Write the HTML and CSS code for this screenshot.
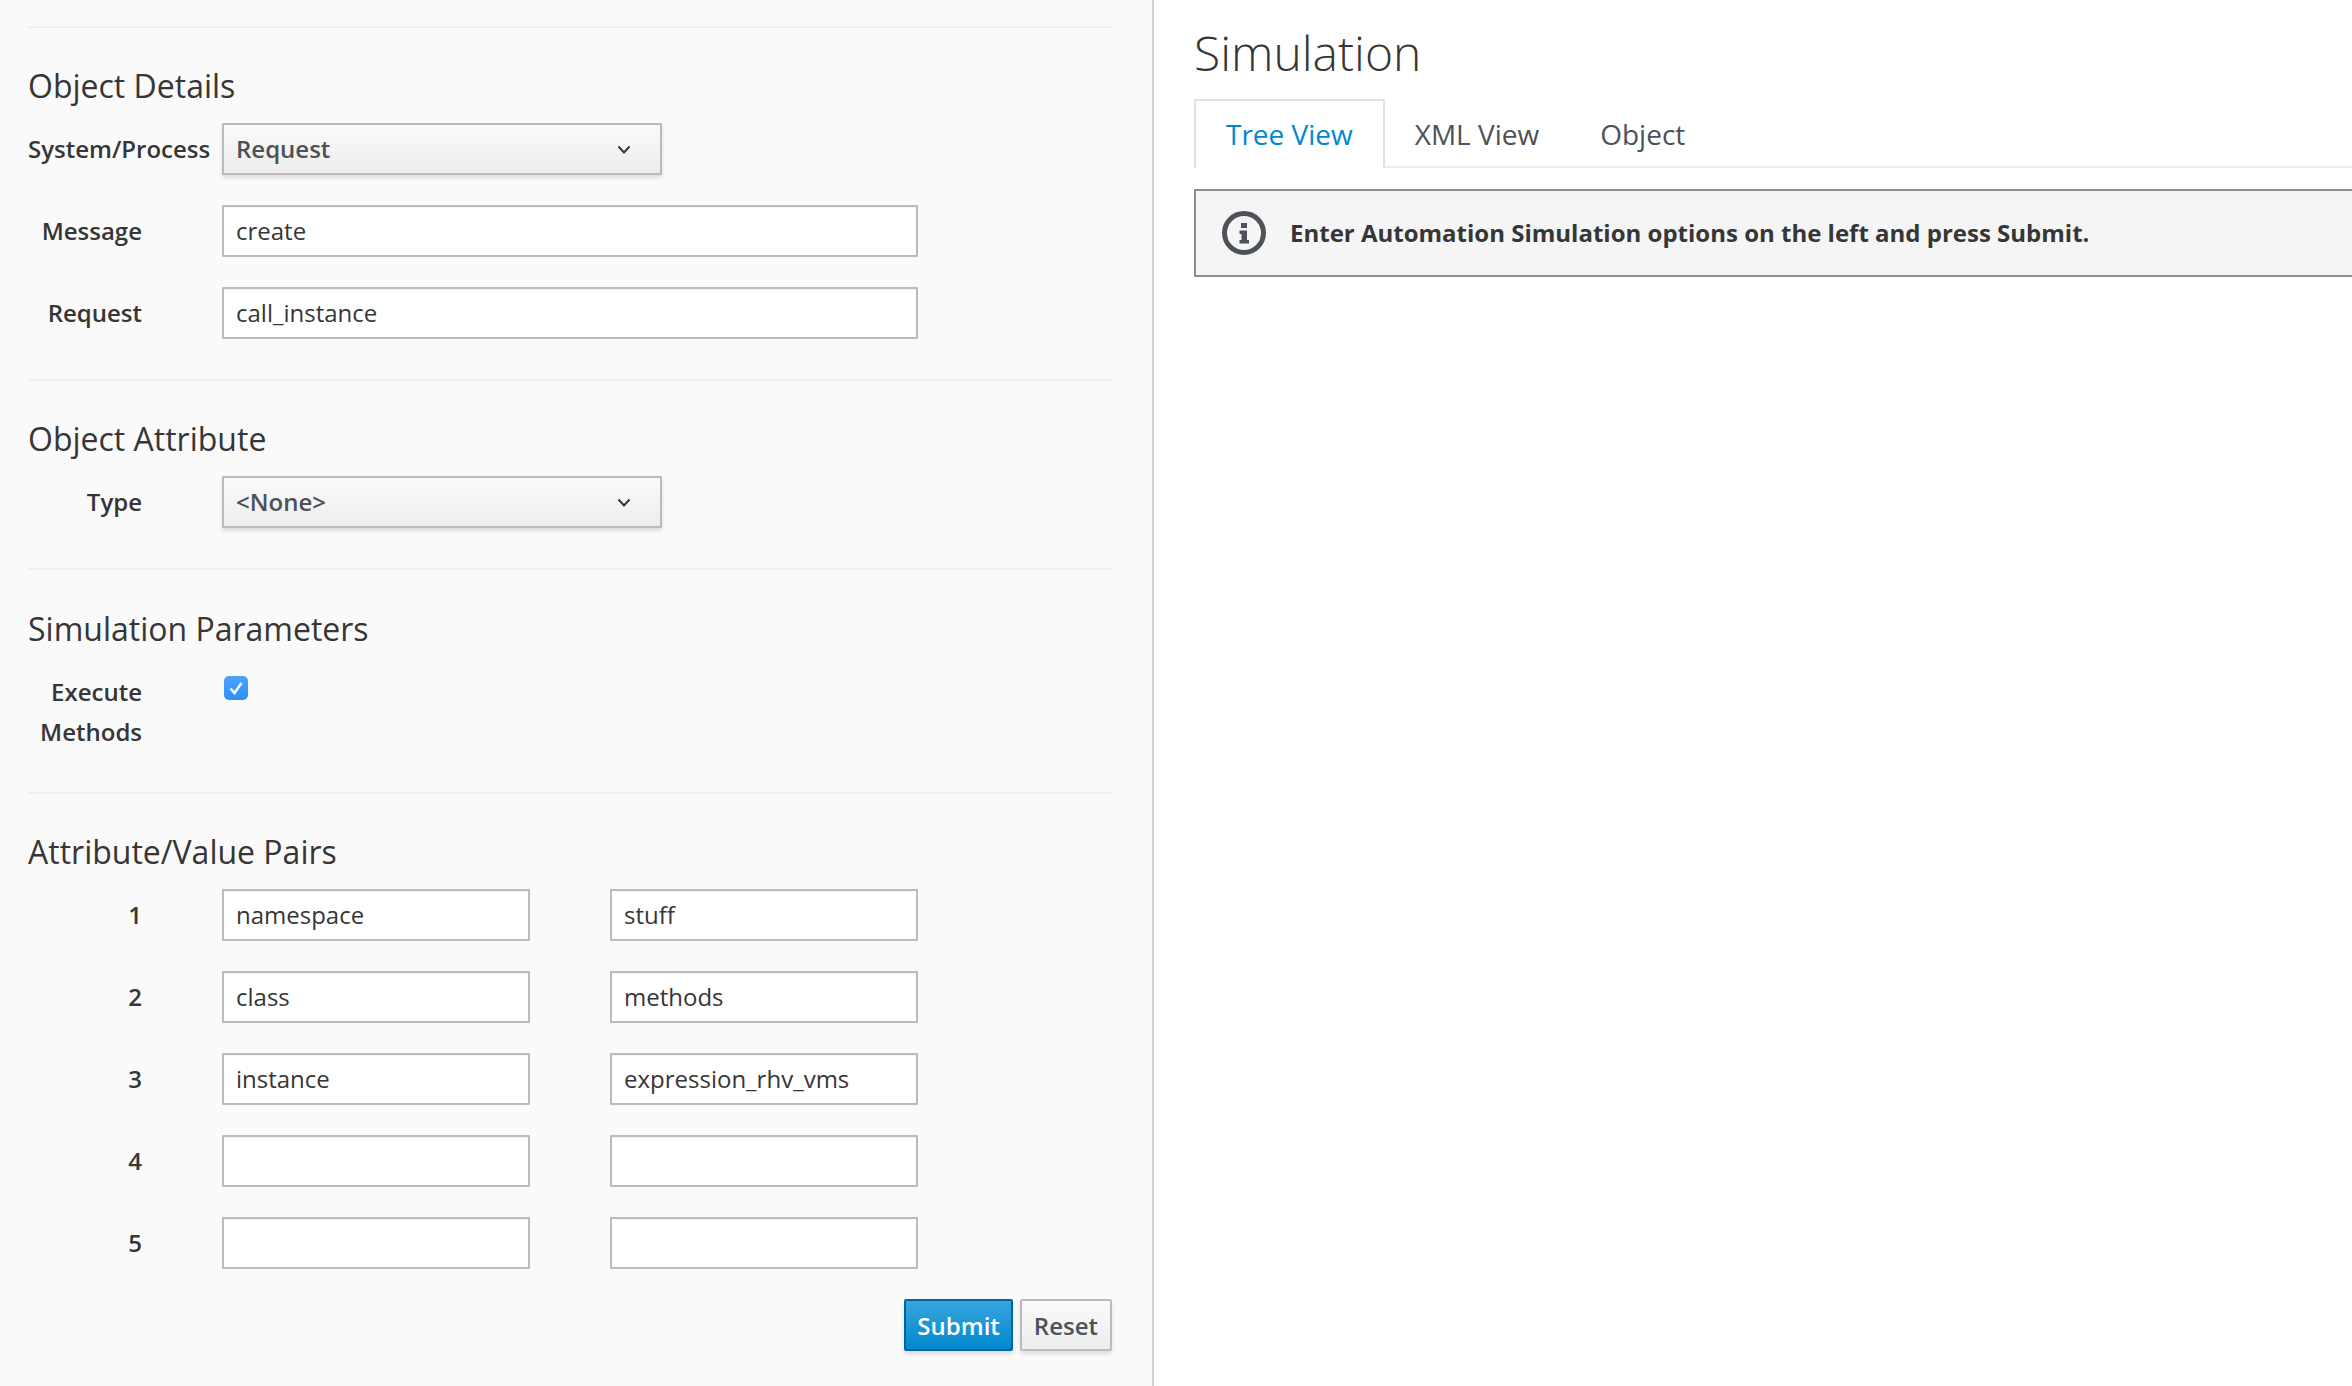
FILE: index.html
```html
<!DOCTYPE html>
<html lang="en">
<head>
  <meta charset="UTF-8">
  <title>Simulation</title>
  <link rel="stylesheet" href="styles.css">
</head>
<body>
  <div class="page">
    <aside class="sidebar">
      <hr class="rule">

      <h3>Object Details</h3>
      <div class="form-row">
        <label class="row-label wide">System/Process</label>
        <div class="select-wrap">
          <select class="select"><option>Request</option></select>
          <svg class="chevron" viewBox="0 0 14 10" width="14" height="10"><path d="M1.5 1.5 7 7.5l5.5-6" fill="none" stroke="#363636" stroke-width="2"/></svg>
        </div>
      </div>
      <div class="form-row">
        <label class="row-label">Message</label>
        <input class="input full" type="text" value="create">
      </div>
      <div class="form-row">
        <label class="row-label">Request</label>
        <input class="input full" type="text" value="call_instance">
      </div>
      <hr class="rule">

      <h3>Object Attribute</h3>
      <div class="form-row">
        <label class="row-label">Type</label>
        <div class="select-wrap">
          <select class="select"><option>&lt;None&gt;</option></select>
          <svg class="chevron" viewBox="0 0 14 10" width="14" height="10"><path d="M1.5 1.5 7 7.5l5.5-6" fill="none" stroke="#363636" stroke-width="2"/></svg>
        </div>
      </div>
      <hr class="rule">

      <h3 class="params-title">Simulation Parameters</h3>
      <div class="form-row check-row">
        <label class="row-label">Execute Methods</label>
        <span class="checkbox">
          <svg viewBox="0 0 24 24" width="24" height="24"><path d="M6.5 12.5 10.5 17 17.5 7" fill="none" stroke="#fff" stroke-width="2.4"/></svg>
        </span>
      </div>
      <hr class="rule">

      <h3>Attribute/Value Pairs</h3>
      <div class="form-row">
        <label class="row-label">1</label>
        <div class="pair">
          <input class="input" type="text" value="namespace">
          <input class="input" type="text" value="stuff">
        </div>
      </div>
      <div class="form-row">
        <label class="row-label">2</label>
        <div class="pair">
          <input class="input" type="text" value="class">
          <input class="input" type="text" value="methods">
        </div>
      </div>
      <div class="form-row">
        <label class="row-label">3</label>
        <div class="pair">
          <input class="input" type="text" value="instance">
          <input class="input" type="text" value="expression_rhv_vms">
        </div>
      </div>
      <div class="form-row">
        <label class="row-label">4</label>
        <div class="pair">
          <input class="input" type="text">
          <input class="input" type="text">
        </div>
      </div>
      <div class="form-row">
        <label class="row-label">5</label>
        <div class="pair">
          <input class="input" type="text">
          <input class="input" type="text">
        </div>
      </div>

      <div class="actions">
        <button class="btn btn-primary">Submit</button>
        <button class="btn">Reset</button>
      </div>
    </aside>

    <main class="content">
      <h1>Simulation</h1>
      <ul class="tabs">
        <li class="tab active">Tree View</li>
        <li class="tab">XML View</li>
        <li class="tab">Object</li>
      </ul>
      <div class="alert">
        <svg class="alert-icon" viewBox="0 0 44 44" width="44" height="44">
          <circle cx="22" cy="22" r="19.5" fill="none" stroke="#4d5258" stroke-width="5"/>
          <path d="M19 12h6v5h-6zM17.5 19.5H25V29h2v3.5H17.5V29h2v-6h-2z" fill="#4d5258"/>
        </svg>
        <strong>Enter Automation Simulation options on the left and press Submit.</strong>
      </div>
    </main>
  </div>
</body>
</html>
```

FILE: styles.css
```css
html, body {
  margin: 0;
  height: 100%;
  overflow: hidden;
}
body {
  background: #fff;
  color: #363636;
  font-family: "Open Sans", "Liberation Sans", sans-serif;
  font-size: 24px;
}
.page {
  display: flex;
  height: 1386px;
}

/* left column */
.sidebar {
  width: 1154px;
  flex: none;
  box-sizing: border-box;
  padding: 26px 40px 0 28px;
  background: #fafafa;
  border-right: 2px solid #d1d1d1;
}
.rule {
  height: 2px;
  margin: 0;
  border: 0;
  background: #f1f1f1;
}
h3 {
  margin: 38px 0 17px;
  height: 40px;
  font-size: 32px;
  font-weight: 400;
  line-height: 40px;
}
.params-title {
  margin-top: 39px;
}
.form-row {
  display: flex;
  align-items: center;
  height: 52px;
  margin-bottom: 30px;
}
.form-row + .rule {
  margin-top: 40px;
}
.row-label {
  width: 194px;
  flex: none;
  box-sizing: border-box;
  padding-right: 80px;
  font-weight: 600;
  text-align: right;
  line-height: 40px;
}
.row-label.wide {
  padding-right: 12px;
}
.input, .select {
  box-sizing: border-box;
  height: 52px;
  padding: 0 12px 2px;
  border: 2px solid #bbb;
  border-radius: 1px;
  color: #363636;
  font-family: inherit;
  font-size: 24px;
}
.input {
  width: 308px;
  background: #fff;
  box-shadow: inset 0 1px 1px rgba(3, 3, 3, 0.05);
}
.input.full {
  width: 696px;
}
.pair {
  display: flex;
  gap: 80px;
}
.select-wrap {
  position: relative;
  width: 440px;
}
.select {
  display: block;
  width: 100%;
  appearance: none;
  background: linear-gradient(#fafafa, #ededed);
  box-shadow: 0 3px 4px rgba(3, 3, 3, 0.12);
  color: #4d5258;
  font-weight: 600;
}
.chevron {
  position: absolute;
  top: 22px;
  right: 31px;
}
.check-row {
  align-items: flex-start;
  height: 80px;
  margin-top: 23px;
  margin-bottom: 0;
}
.checkbox {
  width: 24px;
  height: 24px;
  margin: 4px 0 0 2px;
  border-radius: 5px;
  background: linear-gradient(#4ba3ff, #2f8ff5);
}
.checkbox svg {
  display: block;
}
.actions {
  display: flex;
  justify-content: flex-end;
  gap: 7px;
}
.btn {
  height: 52px;
  padding: 0 12px;
  border: 2px solid #bbb;
  border-radius: 2px;
  background: linear-gradient(#fafafa, #ededed);
  box-shadow: 0 3px 4px rgba(3, 3, 3, 0.12);
  color: #4d5258;
  font-family: inherit;
  font-size: 24px;
  font-weight: 600;
}
.btn-primary {
  padding: 0 11px;
  border-color: #00659c;
  background: linear-gradient(#39a5dc, #0088ce);
  color: #fff;
}

/* right column */
.content {
  flex: 1;
  min-width: 0;
  padding-left: 40px;
}
h1 {
  margin: 26px 0 19px;
  height: 54px;
  font-size: 48px;
  font-weight: 300;
  line-height: 54px;
}
.tabs {
  display: flex;
  height: 69px;
  margin: 0;
  padding: 0;
  list-style: none;
  border-bottom: 2px solid #ededed;
  box-sizing: border-box;
}
.tab {
  padding: 0 30px;
  border-top: 2px solid transparent;
  font-size: 28px;
  line-height: 66px;
  color: #4d5258;
}
.tab + .tab + .tab {
  margin-left: 1px;
}
.active {
  height: 69px;
  box-sizing: border-box;
  border: 2px solid #e1e1e1;
  border-bottom: 0;
  background: #fff;
  color: #0088ce;
}
.alert {
  display: flex;
  align-items: center;
  gap: 24px;
  box-sizing: border-box;
  height: 88px;
  margin: 21px -10px 0 0;
  padding: 0 0 2px 26px;
  border: 2px solid #8b8d8f;
  border-radius: 1px;
  background: #f5f5f5;
}
.alert-icon {
  flex: none;
  margin-top: 2px;
}
.alert strong {
  font-weight: 700;
}
```
